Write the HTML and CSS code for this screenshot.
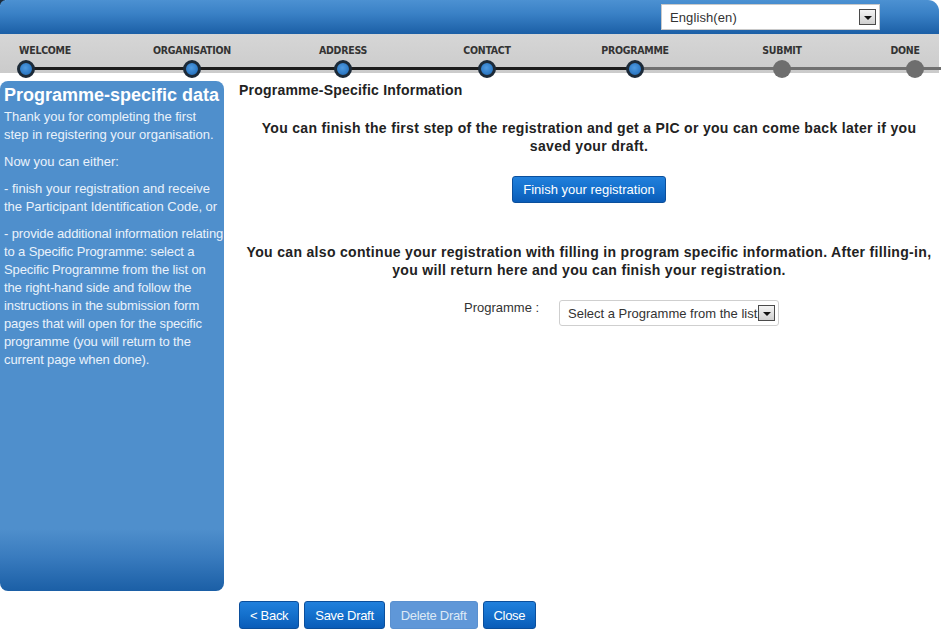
FILE: index.html
```html
<!DOCTYPE html>
<html>
<head>
<meta charset="utf-8">
<link rel="stylesheet" href="styles.css">
</head>
<body>
<div class="top">
  <div class="header">
    <div class="lang">
      <span class="lang-text">English(en)</span>
      <span class="drop"><span class="tri"></span></span>
    </div>
  </div>
</div>
<div class="stepbar">
  <div class="steps">
    <div class="step done first"><span class="label">WELCOME</span><span class="dot"></span></div>
    <div class="step done"><span class="label">ORGANISATION</span><span class="dot"></span></div>
    <div class="step done"><span class="label">ADDRESS</span><span class="dot"></span></div>
    <div class="step done"><span class="label">CONTACT</span><span class="dot"></span></div>
    <div class="step done"><span class="label">PROGRAMME</span><span class="dot"></span></div>
    <div class="step todo"><span class="label">SUBMIT</span><span class="dot"></span></div>
    <div class="step todo last"><span class="label">DONE</span><span class="dot"></span></div>
  </div>
</div>
<div class="body-row">
  <aside class="sidebar">
    <h2 class="side-title">Programme-specific data</h2>
    <p>Thank you for completing the first step in registering your organisation.</p>
    <p>Now you can either:</p>
    <p>- finish your registration and receive the Participant Identification Code, or</p>
    <p class="tight">- provide additional information relating to a Specific Programme: select a Specific Programme from the list on the right-hand side and follow the instructions in the submission form pages that will open for the specific programme (you will return to the current page when done).</p>
  </aside>
  <main class="main">
    <h1 class="main-title">Programme-Specific Information</h1>
    <p class="lead lead1">You can finish the first step of the registration and get a PIC or you can come back later if you saved your draft.</p>
    <div class="center"><span class="btn btn-finish">Finish your registration</span></div>
    <p class="lead lead2">You can also continue your registration with filling in program specific information. After filling-in, you will return here and you can finish your registration.</p>
    <div class="prog-row">
      <span class="prog-label">Programme :</span>
      <div class="prog-select">
        <span class="prog-text">Select a Programme from the list</span>
        <span class="drop drop-over"><span class="tri"></span></span>
      </div>
    </div>
  </main>
</div>
<div class="footer">
  <span class="btn">&lt; Back</span>
  <span class="btn">Save Draft</span>
  <span class="btn btn-disabled">Delete Draft</span>
  <span class="btn">Close</span>
</div>
</body>
</html>
```
FILE: styles.css
```css
html, body {
  margin: 0;
  padding: 0;
  background: #ffffff;
  font-family: "Liberation Sans", Arial, sans-serif;
  color: #222;
}

.top {
  width: 939px;
  background: linear-gradient(135deg, #1d2c3c 0, #1d2c3c 4px, transparent 4px);
}

.header {
  height: 34px;
  background: linear-gradient(to bottom, #4c91d2 0%, #3a81c6 40%, #1b5fa6 100%);
  border-top-right-radius: 11px;
  border-top-left-radius: 6px;
  display: flex;
  justify-content: flex-end;
  align-items: flex-start;
  padding-right: 59px;
}

.lang {
  margin-top: 4px;
  width: 219px;
  height: 26px;
  box-sizing: border-box;
  background: #fff;
  border: 1px solid #c9c9c9;
  display: flex;
  align-items: center;
  justify-content: space-between;
  padding: 0 3px 0 8px;
  font-size: 13px;
  letter-spacing: 0.1px;
  color: #333;
}

.drop {
  flex: none;
  width: 17px;
  height: 16px;
  box-sizing: border-box;
  border: 1px solid #4a4a4a;
  background: linear-gradient(to bottom, #f4f4f4, #cfcfcf);
  display: flex;
  align-items: center;
  justify-content: center;
}

.tri {
  width: 0;
  height: 0;
  border-left: 4px solid transparent;
  border-right: 4px solid transparent;
  border-top: 4px solid #111;
  margin-top: 1px;
}

.stepbar {
  height: 39px;
  width: 939px;
  background: linear-gradient(to bottom, #d6d6d6, #cbcbcb);
}

.steps {
  position: relative;
  padding-top: 10px;
  display: grid;
  grid-template-columns: 26px 166px 151px 144px 148px 147px 133px 1fr;
}

.steps::before {
  content: "";
  position: absolute;
  left: 26px;
  right: -2px;
  top: 33px;
  height: 3px;
  background: linear-gradient(to right, #1c1c1c 0, #1c1c1c 609px, #707070 609px);
}

.step {
  width: 0;
  display: flex;
  flex-direction: column;
  align-items: center;
  position: relative;
  z-index: 1;
}

.step:nth-child(1) { grid-column: 2; }
.step:nth-child(2) { grid-column: 3; }
.step:nth-child(3) { grid-column: 4; }
.step:nth-child(4) { grid-column: 5; }
.step:nth-child(5) { grid-column: 6; }
.step:nth-child(6) { grid-column: 7; }
.step:nth-child(7) { grid-column: 8; }

.label {
  white-space: nowrap;
  font-family: "DejaVu Sans Condensed", "DejaVu Sans", sans-serif;
  font-stretch: condensed;
  font-weight: bold;
  font-size: 10.5px;
  line-height: 13px;
  color: #333;
  letter-spacing: -0.25px;
}

.first .label { margin-left: 38px; }
.last .label { margin-right: 20px; }

.dot {
  margin-top: 3px;
  width: 18px;
  height: 18px;
  box-sizing: border-box;
  border-radius: 50%;
}

.done .dot {
  background: radial-gradient(circle at 45% 40%, #4f9ae0 0, #2f7bc6 60%, #2366a8 100%);
  border: 3px solid #1c2a38;
}

.todo .dot {
  background: #6e6e6e;
}

.body-row {
  display: flex;
  margin-top: 8px;
}

.sidebar {
  width: 224px;
  height: 510px;
  box-sizing: border-box;
  padding: 3px 0 0 4px;
  border-radius: 8px;
  background: linear-gradient(to bottom, #4f8fcc 0, #4f8fcc 448px, #3a7cbf 475px, #1b5fa6 510px);
  color: #eaf2fb;
  font-size: 13px;
  line-height: 18px;
}

.side-title {
  margin: 0 0 2px 0;
  font-size: 18px;
  line-height: 22px;
  font-weight: bold;
  color: #fff;
  white-space: nowrap;
}

.sidebar p {
  margin: 0 0 9px 0;
}

.sidebar p.tight {
  letter-spacing: -0.12px;
}

.main {
  margin-left: 15px;
  width: 700px;
}

.main-title {
  margin: 0;
  font-size: 14px;
  line-height: 18px;
  font-weight: bold;
  letter-spacing: 0.22px;
  color: #222;
}

.lead {
  font-size: 14px;
  line-height: 18px;
  font-weight: bold;
  letter-spacing: 0.32px;
  text-align: center;
  color: #222;
  margin: 0;
}

.lead1 {
  margin-top: 20px;
  padding: 0 12px;
}

.lead2 {
  margin-top: 40px;
}

.center {
  display: flex;
  justify-content: center;
  margin-top: 21px;
}

.btn {
  display: inline-flex;
  align-items: center;
  justify-content: center;
  box-sizing: border-box;
  height: 28px;
  padding: 0 10px;
  font-size: 13px;
  letter-spacing: -0.3px;
  color: #fff;
  background: linear-gradient(to bottom, #2180dc 0, #1470cc 50%, #0a5cb8 100%);
  border: 1px solid #0b4f9c;
  border-radius: 3px;
  white-space: nowrap;
}

.btn-finish {
  height: 27px;
  width: 154px;
  letter-spacing: 0;
}

.btn-disabled {
  background: #5f97d8;
  border-color: #5a90cf;
  color: #dde9f6;
}

.prog-row {
  display: flex;
  align-items: flex-start;
  margin-top: 21px;
  margin-left: 225px;
}

.prog-label {
  font-size: 13px;
  line-height: 18px;
  color: #333;
  width: 95px;
  margin-top: -1px;
}

.prog-select {
  width: 220px;
  height: 26px;
  box-sizing: border-box;
  border: 1px solid #cfcfcf;
  border-radius: 3px;
  display: flex;
  align-items: center;
  padding: 0 3px 0 8px;
  font-size: 13px;
  color: #333;
}

.prog-text {
  flex: 1;
  min-width: 0;
  overflow: hidden;
  white-space: nowrap;
  margin-right: -3px;
}

.footer {
  display: flex;
  gap: 5px;
  margin-top: 10px;
  margin-left: 239px;
}
```
